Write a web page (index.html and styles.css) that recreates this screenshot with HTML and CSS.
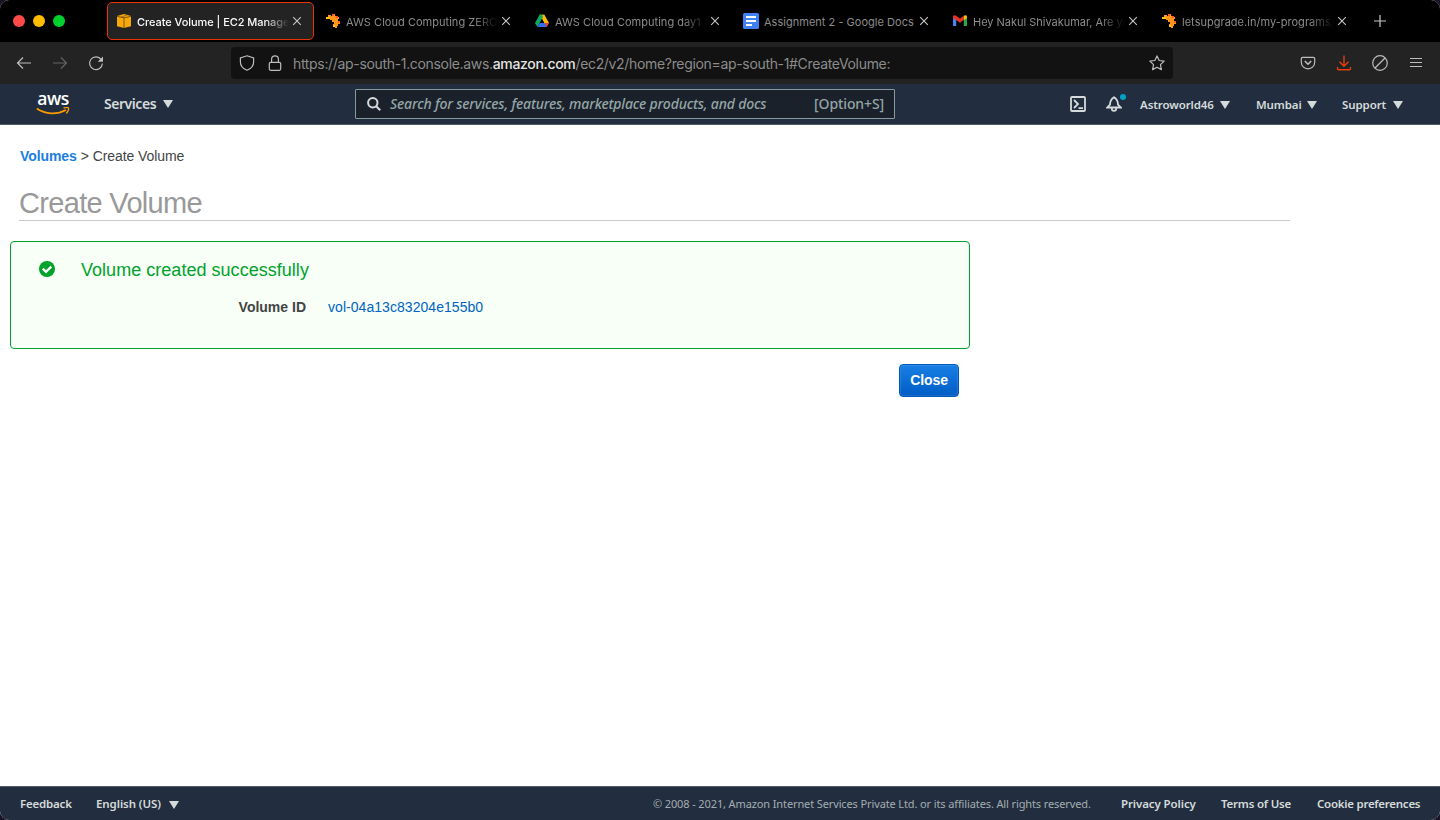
FILE: index.html
```html
<!DOCTYPE html>
<html lang="en">
<head>
<meta charset="utf-8">
<title>Create Volume | EC2 Management Console</title>
<link rel="stylesheet" href="styles.css">
</head>
<body>
<svg class="defs" width="0" height="0" aria-hidden="true">
  <symbol id="x" viewBox="0 0 10 10"><path d="M1.2 1.2l7.6 7.6M8.8 1.2L1.2 8.800" stroke="currentColor" stroke-width="1.1" fill="none"/></symbol>
  <symbol id="lu" viewBox="0 0 16 16">
    <path d="M1 4h2V2h3v1h1V1h3v2h2v1h2v2h-1v2h2v3h-2v2h-1v2h-2v-1H8v-3h1V9H7V7H5V6H2z" fill="#ff941a"/>
    <path d="M1 4h4v2H1zM8 12h2v2H8z" fill="#ffc60a"/><path d="M7 1h2v2H7zM11 3h2v2h-2zM13 8h2v2h-2z" fill="#ff5a1c"/>
  </symbol>
  <symbol id="caret" viewBox="0 0 10 8"><path d="M0 0h10L5 8z" fill="currentColor"/></symbol>
</svg>
<div class="window">
  <header class="tabs">
    <div class="lights"><i class="light red"></i><i class="light yellow"></i><i class="light green"></i></div>
    <div class="tab active">
      <svg class="fav" viewBox="0 0 16 16"><path d="M1 3L8 1l7 2v10.200L8 15l-7-1.800z" fill="#f8a90a"/><path d="M1 3.400l7 1.400 7-1.400M8 4.800V15" stroke="#5e4112" stroke-width=".8" fill="none"/><path d="M5 4l6-1.900" stroke="#8a5b0c" stroke-width=".7"/></svg>
      <span class="title t1">Create Volume | EC2 Manage</span><svg class="x"><use href="#x"/></svg>
    </div>
    <div class="tab"><svg class="fav"><use href="#lu"/></svg><span class="title t2">AWS Cloud Computing ZERO</span><svg class="x"><use href="#x"/></svg></div>
    <div class="tab">
      <svg class="fav" viewBox="0 0 16 16"><path d="M5.600 1.800h4.800L8 6.100 3.400 14 1 9.900z" fill="#0da960"/><path d="M5.600 1.800h4.800L15 10h-4.800z" fill="#ffba00"/><path d="M5.600 1.800h2.400L9 4 8 6.100 6 4z" fill="#0da960"/><path d="M5.800 10H15l-2.400 4H3.400z" fill="#2d6ff0"/><path d="M10.400 10H15l-2.400 4z" fill="#ea4335"/><path d="M8 6.100l2.200 3.900H5.800z" fill="#000"/></svg>
      <span class="title t3">AWS Cloud Computing day1 &amp;</span><svg class="x"><use href="#x"/></svg>
    </div>
    <div class="tab">
      <svg class="fav" viewBox="0 0 16 16"><rect width="16" height="16" rx="1.500" fill="#4080f5"/><path d="M3 4h10M3 8h10M3 12h6" stroke="#fff" stroke-width="2"/></svg>
      <span class="title t4">Assignment 2 - Google Docs</span><svg class="x"><use href="#x"/></svg>
    </div>
    <div class="tab">
      <svg class="fav" viewBox="0 0 16 16"><path d="M1 4v9h3.200V6z" fill="#4285f4"/><path d="M15 4v9h-3.200V6z" fill="#25a94c"/><path d="M1 4c0-1.700 1.800-2.300 3.200-1.200L8 5.800l3.800-3v4L8 9.800 1 5z" fill="#ea3327"/><path d="M11.800 2.800C13.200 1.700 15 2.300 15 4v1l-3.200 2.200z" fill="#fbbc04"/></svg>
      <span class="title t5">Hey Nakul Shivakumar, Are yo</span><svg class="x"><use href="#x"/></svg>
    </div>
    <div class="tab"><svg class="fav"><use href="#lu"/></svg><span class="title t6">letsupgrade.in/my-programs/</span><svg class="x"><use href="#x"/></svg></div>
    <svg class="plus" viewBox="0 0 12 12"><path d="M6 0v12M0 6h12" stroke="#c9c9c9" stroke-width="1.2"/></svg>
  </header>

  <div class="toolbar">
    <svg class="ic" viewBox="0 0 16 16"><path d="M15 8H1.500M7 2.500L1.500 8 7 13.500" class="ln"/></svg>
    <svg class="ic dim" viewBox="0 0 16 16"><path d="M1 8h13.500M9 2.500L14.500 8 9 13.500" class="ln"/></svg>
    <svg class="ic" viewBox="0 0 16 16"><path d="M13.300 4.600A6.400 6.400 0 1 0 14.400 8.500" class="ln"/><path d="M15 1.500v5.300H9.700z" fill="#bdbdbd"/></svg>
    <div class="urlbar">
      <svg class="ic" viewBox="0 0 16 16"><path d="M8 .8L14.600 3v4c0 4-2.600 6.700-6.600 8.300C4 13.700 1.400 11 1.400 7V3z" class="ln"/></svg>
      <svg class="ic lock" viewBox="0 0 16 16"><rect x="2.300" y="7.300" width="11.400" height="8" rx="1.500" class="ln"/><path d="M4.600 7V4.200a3.400 3.400 0 0 1 6.800 0V7" class="ln"/></svg>
      <span class="url">https://ap-south-1.console.aws.<b>amazon.com</b>/ec2/v2/home?region=ap-south-1#CreateVolume:</span>
      <svg class="ic star" viewBox="0 0 16 16"><path d="M8 .9l2.150 4.600 5 .65-3.700 3.450.95 5L8 12.200 3.600 14.600l.95-5L.85 6.150l5-.65z" class="ln" stroke-linejoin="round"/></svg>
    </div>
    <div class="tools">
      <svg class="ic" viewBox="0 0 16 16"><path d="M2.600 2.300h10.800c.8 0 1.300.5 1.300 1.300v3.600a6.700 6.700 0 0 1-13.400 0V3.600c0-.8.5-1.300 1.300-1.300z" class="ln"/><path d="M4.800 6L8 9.200 11.200 6" class="ln thick"/></svg>
      <svg class="ic dl" viewBox="0 0 16 16"><path d="M8 .5V11M3.500 6.700L8 11.200l4.500-4.500M1.500 12v1.500q0 1.300 1.300 1.300h10.400q1.300 0 1.300-1.300V12" class="ln"/></svg>
      <svg class="ic" viewBox="0 0 16 16"><circle cx="8" cy="8" r="7.300" class="ln"/><path d="M13 3L3 13" class="ln"/></svg>
      <svg class="ic" viewBox="0 0 16 16"><path d="M2 3.500h12M2 7.500h12M2 11.500h12" class="ln"/></svg>
    </div>
  </div>

  <nav class="aws">
    <div class="logo"><span>aws</span><svg viewBox="0 0 34 9"><path d="M.8 1.500C9.500 7.500 20.500 8 30 3" stroke="#f90" stroke-width="1.800" fill="none"/><path d="M27.500 1.200c2-.8 4.500-.7 5 0 .4.900-.6 3.800-2.200 5.200" stroke="#f90" stroke-width="1.400" fill="none"/></svg></div>
    <div class="services"><span>Services</span><svg class="caret"><use href="#caret"/></svg></div>
    <div class="search">
      <svg viewBox="0 0 14 14"><circle cx="5.800" cy="5.800" r="4.700"/><path d="M9.200 9.200l4 4"/></svg>
      <span class="ph">Search for services, features, marketplace products, and docs</span><span class="key">[Option+S]</span>
    </div>
    <svg class="shell" viewBox="0 0 16 16"><rect x="1" y="1" width="14" height="14" rx="1"/><path d="M4 4l4 4-4 4M8.500 12.200H13"/></svg>
    <div class="bell"><svg viewBox="0 0 16 16"><path d="M1.300 11.500h13.400L12 8.600C12 5 10.500 3 8 1.300 5.500 3 4 5 4 8.600zM5.800 12.500c0 3.200 4.400 3.200 4.400 0"/></svg><i></i></div>
    <div class="menu user"><span>Astroworld46</span><svg class="caret"><use href="#caret"/></svg></div>
    <div class="menu region"><span>Mumbai</span><svg class="caret"><use href="#caret"/></svg></div>
    <div class="menu support"><span>Support</span><svg class="caret"><use href="#caret"/></svg></div>
  </nav>

  <main>
    <div class="crumb"><a>Volumes</a><span>&gt; Create Volume</span></div>
    <h1>Create Volume</h1>
    <section class="success">
      <svg class="ok" viewBox="0 0 16 16"><circle cx="8" cy="8" r="8" fill="#00a22b"/><path d="M3.800 7.700L7 10.800l5.300-5.100" stroke="#fff" stroke-width="2.300" fill="none"/></svg>
      <div class="body">
        <h2>Volume created successfully</h2>
        <div class="row"><b>Volume ID</b><a>vol-04a13c83204e155b0</a></div>
      </div>
    </section>
    <div class="actions"><button>Close</button></div>
  </main>

  <footer>
    <span class="f1">Feedback</span><span class="f2">English (US)</span><svg class="caret"><use href="#caret"/></svg>
    <span class="copy">© 2008 - 2021, Amazon Internet Services Private Ltd. or its affiliates. All rights reserved.</span>
    <span class="f3">Privacy Policy</span><span class="f4">Terms of Use</span><span class="f5">Cookie preferences</span>
  </footer>
</div>
</body>
</html>
```

FILE: styles.css
```css
* { box-sizing: border-box; }
body { margin: 0; background: #1b1226; }
svg { display: block; flex: none; }
span, b, h1, h2, button { white-space: nowrap; }
.defs { position: absolute; }
.window { width: 1440px; height: 820px; display: flex; flex-direction: column; overflow: hidden; border-radius: 9px; background: #fff; }

.tabs { height: 42px; flex: none; display: flex; align-items: center; background: #000; font-family: Inter, sans-serif; }
.lights { display: flex; gap: 8px; width: 107px; padding-left: 13px; }
.light { width: 12px; height: 12px; border-radius: 50%; }
.red { background: #ff4b47; }
.yellow { background: #ffbd00; }
.green { background: #00d02f; }
.tab { width: 207px; height: 38px; margin-right: 2px; padding-left: 9px; display: flex; align-items: center; border-radius: 5px; color: #8c8c8c; font-size: 11px; border: 1px solid transparent; }
.tab.active { background: #232323; border-color: #ee3208; color: #fbfbfe; font-weight: 500; }
.fav { width: 16px; height: 16px; margin-left: -1px; }
.title { width: 152px; margin-left: 5px; line-height: 16px; padding-top: 1px; letter-spacing: .02px; -webkit-mask-image: linear-gradient(90deg, #000 84%, transparent); mask-image: linear-gradient(90deg, #000 84%, transparent); }
.t1 { letter-spacing: -.06px; }
.t2, .t3 { letter-spacing: .03px; }
.t5 { letter-spacing: -.02px; }
.t4 { -webkit-mask-image: none; mask-image: none; }
.x { width: 10px; height: 10px; margin-left: 3px; color: #c8c8c8; }
.plus { width: 12px; height: 12px; margin-left: 13px; }

.toolbar { height: 42px; flex: none; display: flex; align-items: center; padding-left: 16px; background: #232323; }
.ic { width: 16px; height: 16px; }
.ln { fill: none; stroke: #bdbdbd; stroke-width: 1.2; }
.thick { stroke-width: 1.6; }
.toolbar > .ic { margin-right: 20px; }
.dim .ln { stroke: #646464; }
.dl .ln { stroke: #e83c0b; stroke-width: 1.4; }
.urlbar { width: 942px; height: 32px; margin-left: 107px; padding: 0 8px; display: flex; align-items: center; background: #121212; border-radius: 4px; }
.lock { margin: 0 10px 0 12px; }
.url { flex: 1; font: 14px/20px Inter, sans-serif; letter-spacing: -.33px; color: #8c8c8c; padding-top: 2px; }
.url b { font-weight: 500; color: #e5e5e5; }
.tools { display: flex; gap: 20px; margin-left: 127px; }

.aws { height: 41px; flex: none; display: flex; align-items: center; background: #222e3f; border-bottom: 1px solid #515b68; color: #d5dbdb; font-family: "Noto Sans", sans-serif; font-weight: 600; }
.logo { width: 34px; height: 24px; margin-left: 36px; color: #fff; font: 600 17.5px/13px "Open Sans", sans-serif; letter-spacing: -.4px; text-align: center; }
.logo span { display: block; height: 15px; }
.logo svg { width: 34px; height: 9px; }
.services { width: 251px; margin-left: 34px; display: flex; align-items: center; font-size: 14px; line-height: 18px; padding-bottom: 1px; letter-spacing: -.45px; }
.services span { width: 59px; }
.services .caret { margin-top: 1px; }
.caret { width: 10px; height: 8px; }
.search { width: 540px; height: 30px; padding-left: 11px; display: flex; align-items: center; background: #1a212b; border: 1px solid #879b9c; border-radius: 1px; color: #95a5a6; font-size: 14px; line-height: 18px; font-weight: 500; }
.search svg { width: 14px; height: 14px; fill: none; stroke: #d5dbdb; stroke-width: 2; }
.search .ph { width: 424px; margin-left: 9px; font-style: italic; letter-spacing: -.17px; }
.key { letter-spacing: -.1px; }
.shell { width: 16px; height: 16px; margin-left: 175px; fill: none; stroke: #d5dbdb; stroke-width: 1.8; }
.bell { position: relative; margin-left: 20px; width: 34px; }
.bell svg { width: 16px; height: 16px; fill: none; stroke: #d5dbdb; stroke-width: 1.8; }
.bell i { position: absolute; left: 14px; top: -2px; width: 6px; height: 6px; border-radius: 50%; background: #00a1c9; }
.menu { display: flex; align-items: center; font-size: 11.5px; padding-top: 1px; letter-spacing: -.1px; }
.user { width: 116px; } .user span { width: 80px; }
.region { width: 86px; } .region span { width: 51px; }
.support span { width: 51px; }

main { flex: 1; font-family: "Liberation Sans", Arial, sans-serif; color: #444; padding: 22px 0 0; }
.crumb { display: flex; gap: 4px; padding-left: 20px; font-size: 14px; line-height: 18px; letter-spacing: -.08px; }
.crumb a { font-weight: 700; color: #1b7ee2; }
h1 { width: 1271px; height: 38px; margin: 18px 0 20px 19px; padding-top: 3px; font-size: 29px; line-height: 34px; font-weight: 400; letter-spacing: -.68px; color: #999; border-bottom: 1px solid #ccc; }
.success { width: 960px; height: 108px; margin-left: 10px; padding: 19px 0 0 28px; display: flex; background: #f7fff7; border: 1px solid #00a22b; border-radius: 4px; }
.ok { width: 16px; height: 16px; }
.body { padding-left: 26px; }
h2 { margin: -2px 0 0; font-size: 18px; line-height: 22px; font-weight: 400; color: #00a22b; letter-spacing: .03px; }
.row { display: flex; margin-top: 17px; font-size: 14px; line-height: 18px; }
.row b { width: 225px; text-align: right; }
.row a { margin-left: 22px; color: #0063c2; letter-spacing: .05px; }
.actions { width: 959px; display: flex; justify-content: flex-end; padding-top: 15px; }
button { width: 60px; height: 33px; padding: 0 0 2px; border: 1px solid #0059b8; border-radius: 4px; color: #fff; font: 700 14px "Liberation Sans", sans-serif; letter-spacing: -.1px; background: linear-gradient(#187fe4, #005dc5); box-shadow: inset 0 0 0 1px rgba(255, 255, 255, .1); }

footer { height: 34px; flex: none; display: flex; align-items: center; padding-left: 20px; background: #222e3f; border-top: 1px solid #515b68; color: #d5dbdb; font: 600 11.5px/16px "Noto Sans", sans-serif; padding-top: 1px; letter-spacing: -.2px; }
footer span { margin-top: -1px; }
footer .caret { margin-top: 1px; }
.f1 { width: 76px; }
.f2 { width: 73px; letter-spacing: -.08px; }
.f5 { letter-spacing: -.26px; }
.copy { width: 468px; margin-left: 474px; color: #a3adb0; font-size: 11px; font-weight: 400; letter-spacing: -.12px; }
.f3 { width: 100px; letter-spacing: -.1px; }
.f4 { width: 96px; }
```
